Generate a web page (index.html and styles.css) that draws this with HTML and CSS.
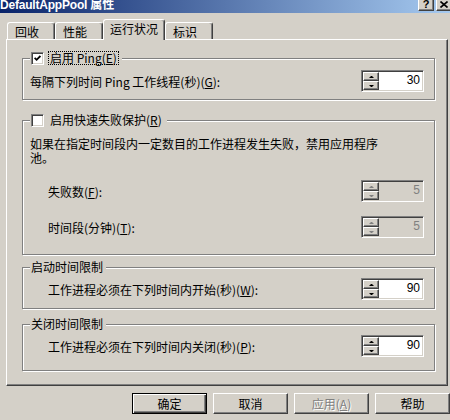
FILE: index.html
```html
<!DOCTYPE html>
<html lang="zh-CN">
<head>
  <meta charset="UTF-8" />
  <title>DefaultAppPool 属性</title>
  <link rel="stylesheet" href="styles.css">
</head>
<body>

  <div class="titlebar">
    <span class="title">DefaultAppPool 属性</span>
    <div class="title-btns">
      <span class="tbtn">?</span>
      <span class="tbtn">
        <svg width="8" height="7" viewBox="0 0 8 7"><path d="M0.5 0.5 L7.5 6.5 M7.5 0.5 L0.5 6.5" stroke="#000" stroke-width="1.6"/></svg>
      </span>
    </div>
  </div>

  <div class="tabs">
    <span class="tab">回收</span>
    <span class="tab">性能</span>
    <span class="tab active">运行状况</span>
    <span class="tab">标识</span>
  </div>

  <div class="panel">

    <fieldset class="group g-ping">
      <legend>
        <span class="check">
          <svg width="7" height="7" viewBox="0 0 7 7"><polyline points="0.6,2.8 2.6,4.8 6.4,1" fill="none" stroke="#000" stroke-width="1.8"/></svg>
        </span>
        <span class="chk-label focus">启用 Ping(<u>E</u>)</span>
      </legend>
      <div class="row">
        <span>每隔下列时间 Ping 工作线程(秒)(<u>G</u>):</span>
        <div class="spin">
          <div class="spin-btns"><span class="sb up"></span><span class="sb down"></span></div>
          <div class="spin-val">30</div>
        </div>
      </div>
    </fieldset>

    <fieldset class="group g-rapid">
      <legend>
        <span class="check"></span>
        <span class="chk-label">启用快速失败保护(<u>R</u>)</span>
      </legend>
      <p class="desc">如果在指定时间段内一定数目的工作进程发生失败，禁用应用程序池。</p>
      <div class="row indent first">
        <span>失败数(<u>F</u>):</span>
        <div class="spin disabled">
          <div class="spin-btns"><span class="sb up"></span><span class="sb down"></span></div>
          <div class="spin-val">5</div>
        </div>
      </div>
      <div class="row indent second">
        <span>时间段(分钟)(<u>T</u>):</span>
        <div class="spin disabled">
          <div class="spin-btns"><span class="sb up"></span><span class="sb down"></span></div>
          <div class="spin-val">5</div>
        </div>
      </div>
    </fieldset>

    <fieldset class="group g-start">
      <legend>启动时间限制</legend>
      <div class="row indent">
        <span>工作进程必须在下列时间内开始(秒)(<u>W</u>):</span>
        <div class="spin">
          <div class="spin-btns"><span class="sb up"></span><span class="sb down"></span></div>
          <div class="spin-val">90</div>
        </div>
      </div>
    </fieldset>

    <fieldset class="group g-stop">
      <legend>关闭时间限制</legend>
      <div class="row indent">
        <span>工作进程必须在下列时间内关闭(秒)(<u>P</u>):</span>
        <div class="spin">
          <div class="spin-btns"><span class="sb up"></span><span class="sb down"></span></div>
          <div class="spin-val">90</div>
        </div>
      </div>
    </fieldset>

  </div>

  <div class="buttons">
    <span class="btn default">确定</span>
    <span class="btn">取消</span>
    <span class="btn disabled">应用(<u>A</u>)</span>
    <span class="btn">帮助</span>
  </div>

</body>
</html>
```

FILE: styles.css
```css
body {
  margin: 0;
  width: 450px;
  height: 420px;
  overflow: hidden;
  background-color: #d4d0c8;
  font-family: "Noto Sans CJK SC", sans-serif;
  font-size: 12px;
  color: #000;
}

/* title bar (top is cut off in the shot) */
.titlebar {
  height: 13px;
  display: flex;
  justify-content: space-between;
  align-items: flex-start;
  background: linear-gradient(to right, #0a246a, #a6caf0);
  color: #fff;
}

.title {
  font-family: "Liberation Sans", "Noto Sans CJK SC", sans-serif;
  font-weight: bold;
  font-size: 12px;
  line-height: 11px;
  letter-spacing: -0.2px;
  white-space: nowrap;
}

.title-btns {
  display: flex;
  gap: 2px;
  margin-top: -3px;
  margin-right: -2px;
}

.tbtn {
  width: 16px;
  height: 14px;
  box-sizing: border-box;
  display: flex;
  align-items: center;
  justify-content: center;
  background-color: #d4d0c8;
  border: 1px solid;
  border-color: #fff #404040 #404040 #fff;
  box-shadow: inset -1px -1px 0 #808080;
  color: #000;
  font: bold 11px "Liberation Sans", sans-serif;
}

/* tabs */
.tabs {
  display: flex;
  align-items: flex-end;
  height: 26px;
  padding-left: 7px;
}

.tab {
  height: 17px;
  box-sizing: border-box;
  padding: 2px 15px 0 7px;
  line-height: 14px;
  border: 1px solid;
  border-bottom: 0;
  border-color: #fff #404040 transparent #fff;
  border-radius: 3px 3px 0 0;
  box-shadow: inset -1px 0 0 #808080;
  white-space: nowrap;
}

.tab.active {
  height: 21px;
  padding: 2px 6px 0;
  margin-bottom: -1px;
  position: relative;
  z-index: 1;
  background-color: #d4d0c8;
}

.panel {
  margin-left: 6px;
  width: 442px;
  box-sizing: border-box;
  border: 1px solid;
  border-color: #fff #404040 #404040 #fff;
  box-shadow: inset -1px -1px 0 #808080;
  padding: 11px 12px 14px 15px;
}

/* etched group boxes */
.group {
  margin: 0;
  min-width: 0;
  padding: 0 10px 0 7px;
  border: 1px solid #808080;
  box-shadow: inset 1px 1px 0 #fff, 1px 1px 0 #fff;
}

.group legend {
  display: flex;
  align-items: center;
  height: 14px;
  padding: 0 3px 0 1px;
  line-height: 14px;
  background-color: #d4d0c8;
}

.g-ping {
  padding-top: 5px;
  padding-bottom: 7px;
}

.g-rapid {
  margin-top: 13px;
  padding-top: 5px;
  padding-bottom: 16px;
}

.g-start {
  margin-top: 5px;
  padding-top: 4px;
  padding-bottom: 8px;
}

.g-stop {
  margin-top: 8px;
  padding-top: 4px;
  padding-bottom: 13px;
}

.check {
  width: 13px;
  height: 13px;
  box-sizing: border-box;
  display: flex;
  align-items: center;
  justify-content: center;
  margin-right: 4px;
  background-color: #fff;
  border: 1px solid;
  border-color: #808080 #fff #fff #808080;
  box-shadow: inset 1px 1px 0 #404040, inset -1px -1px 0 #d4d0c8;
}

.chk-label {
  padding: 0 1px;
  line-height: 12px;
  border: 1px dotted transparent;
}

.chk-label.focus {
  border-color: #000;
}

.desc {
  margin: 5px 0 0;
  width: 355px;
  line-height: 14px;
}

.row {
  display: flex;
  justify-content: space-between;
  align-items: center;
}

.row.indent {
  padding-left: 18px;
}

.row.first {
  margin-top: 15px;
}

.row.second {
  margin-top: 14px;
}

/* spinner boxes */
.spin {
  width: 63px;
  height: 22px;
  box-sizing: border-box;
  display: flex;
  padding: 1px;
  background-color: #fff;
  border: 1px solid;
  border-color: #808080 #fff #fff #808080;
  box-shadow: inset 1px 1px 0 #404040, inset -1px -1px 0 #d4d0c8;
}

.spin-btns {
  display: flex;
  flex-direction: column;
  width: 16px;
}

.sb {
  flex: 1;
  box-sizing: border-box;
  display: flex;
  align-items: center;
  justify-content: center;
  background-color: #d4d0c8;
  border: 1px solid;
  border-color: #fff #404040 #404040 #fff;
  box-shadow: inset -1px -1px 0 #808080;
}

.sb::after {
  content: "";
  width: 1px;
  border-left: 2px solid transparent;
  border-right: 2px solid transparent;
}

.sb.up::after {
  border-bottom: 2px solid #000;
}

.sb.down::after {
  border-top: 2px solid #000;
}

.spin-val {
  flex: 1;
  padding-right: 2px;
  text-align: right;
  font: 12px "Liberation Sans", sans-serif;
  line-height: 16px;
}

.spin.disabled {
  background-color: #d4d0c8;
}

.spin.disabled .spin-val {
  color: #808080;
}

.spin.disabled .sb.up::after {
  border-bottom-color: #808080;
}

.spin.disabled .sb.down::after {
  border-top-color: #808080;
}

/* dialog buttons */
.buttons {
  display: flex;
  justify-content: flex-end;
  gap: 6px;
  margin-top: 7px;
}

.btn {
  width: 75px;
  height: 21px;
  box-sizing: border-box;
  display: flex;
  align-items: center;
  justify-content: center;
  border: 1px solid;
  border-color: #fff #404040 #404040 #fff;
  box-shadow: inset -1px -1px 0 #808080;
}

.btn.default {
  border-color: #000;
  box-shadow: inset 1px 1px 0 #fff, inset -1px -1px 0 #404040, inset -2px -2px 0 #808080;
}

.btn.disabled {
  color: #808080;
  text-shadow: 1px 1px 0 #fff;
}
```
